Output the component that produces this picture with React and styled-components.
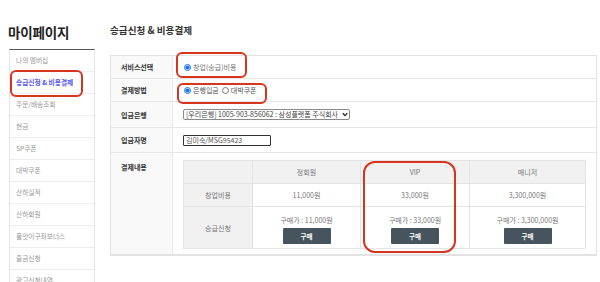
import React from 'react';
import styled, { createGlobalStyle } from 'styled-components';

const GlobalStyle = createGlobalStyle`
  body {
    margin: 0;
    background: #fff;
    font-family: "Noto Sans CJK KR", "Noto Sans", sans-serif;
    color: #333;
  }
`;

const Page = styled.div`
  position: relative;
  display: flex;
  width: 600px;
  height: 282px;
  overflow: hidden;
`;

//** SIDEBAR **//
const Sidebar = styled.aside`
  width: 86px;
  margin-left: 9px;
  flex-shrink: 0;
`;

const SideTitle = styled.h2`
  margin: 0 0 8px -1px;
  padding-top: 24px;
  font-size: 13.5px;
  line-height: 17px;
  font-weight: 700;
  color: #222;
  letter-spacing: -0.2px;
`;

const Menu = styled.ul`
  list-style: none;
  margin: 0;
  padding: 0;
  border-top: 1px solid #555;
  border-left: 1px solid #e6e6e6;
  border-right: 1px solid #e6e6e6;
`;

const MenuItem = styled.li`
  height: 21px;
  line-height: 21px;
  padding-left: 6px;
  border-bottom: 1px solid #eee;
  font-size: 6.7px;
  color: ${p => (p.$active ? '#5656ee' : '#999')};
  font-weight: ${p => (p.$active ? 700 : 400)};
  white-space: nowrap;
`;

//** MAIN **//
const Main = styled.main`
  width: 487px;
  margin-left: 15px;
`;

const MainTitle = styled.h3`
  margin: 0 0 19px;
  padding-top: 24px;
  font-size: 9.6px;
  line-height: 12px;
  font-weight: 700;
  color: #333;
`;

const FormTable = styled.table`
  width: 487px;
  table-layout: fixed;
  border-collapse: collapse;
  border: 1px solid #e2e2e2;
  border-bottom: 2px solid #e2e2e2;
`;

const Row = styled.tr`
  height: ${p => p.$h}px;
  border-bottom: 1px solid #e6e6e6;
`;

const Label = styled.th`
  width: 51px;
  padding: ${p => (p.$top ? '9px 0 0 10px' : '0 0 0 10px')};
  vertical-align: ${p => (p.$top ? 'top' : 'middle')};
  text-align: left;
  background: #f9f9f9;
  border-right: 1px solid #ebebeb;
  font-size: 7px;
  font-weight: 700;
  color: #333;
`;

const Cell = styled.td`
  padding: ${p => p.$pad || '0 0 0 10px'};
  vertical-align: middle;
  font-size: 7px;
  color: #777;
`;

const RadioGroup = styled.div`
  display: flex;
  align-items: center;
  gap: 3px;
  padding-left: 1px;
`;

const RadioLabel = styled.label`
  display: inline-flex;
  align-items: center;
  gap: 2px;
  color: ${p => p.$color || '#777'};
`;

const Radio = styled.input.attrs({ type: 'radio' })`
  width: 7px;
  height: 7px;
  margin: 0;
  accent-color: #1a73e8;
`;

const SelectWrap = styled.div`
  position: relative;
  width: 167px;
  height: 11px;
`;

const Select = styled.select`
  appearance: none;
  width: 100%;
  height: 11px;
  padding: 0 0 0 2px;
  border: 1px solid #8a8a8a;
  border-radius: 2px;
  background: #fff;
  font-family: inherit;
  font-size: 7px;
  line-height: 9px;
  color: #444;
  outline: 0;
`;

const Chevron = styled.svg`
  position: absolute;
  right: 2px;
  top: 3px;
  width: 6px;
  height: 5px;
  pointer-events: none;
`;

const TextInput = styled.input`
  width: 88px;
  height: 11px;
  box-sizing: border-box;
  padding: 0 2px;
  border: 1px solid #333;
  border-radius: 1px;
  font-family: inherit;
  font-size: 7px;
  color: #555;
  outline: 0;
`;

const PriceTable = styled.table`
  width: 100%;
  table-layout: fixed;
  border-collapse: collapse;
  border: 1px solid #e2e2e2;
`;

const PriceRow = styled.tr`
  height: ${p => p.$h}px;
`;

const PriceHead = styled.th`
  width: ${p => (p.$w ? `${p.$w}px` : 'auto')};
  padding: 0;
  background: #f1f1f1;
  border: 1px solid #e4e4e4;
  font-size: 7px;
  font-weight: 400;
  color: #777;
  text-align: center;
`;

const PriceLabel = styled.th`
  padding: 0;
  background: #f1f1f1;
  border: 1px solid #e4e4e4;
  font-size: 7px;
  font-weight: 400;
  color: #777;
  text-align: center;
`;

const PriceCell = styled.td`
  border: 1px solid #e4e4e4;
  text-align: center;
  font-size: 7px;
  color: #777;
  padding: 0;
`;

const BuyBox = styled.div`
  display: flex;
  flex-direction: column;
  align-items: center;
  gap: 3px;
  padding-top: 3px;
`;

const BuyButton = styled.button`
  width: 48px;
  height: 16px;
  border: 0;
  border-radius: 1px;
  background: #46545e;
  color: #fff;
  font-family: inherit;
  font-size: 6.5px;
  font-weight: 700;
  cursor: pointer;
`;

//** ANNOTATIONS **//
const Mark = styled.div`
  position: absolute;
  left: ${p => p.$x}px;
  top: ${p => p.$y}px;
  width: ${p => p.$w}px;
  height: ${p => p.$h}px;
  box-sizing: border-box;
  border: 2.5px solid #d8351f;
  border-radius: ${p => p.$r || 6}px;
  pointer-events: none;
`;

const menu = [
  '나의 멤버십',
  '승급신청 & 비용결제',
  '주문/배송조회',
  '현금',
  'SP쿠폰',
  '대박쿠폰',
  '산하실적',
  '산하회원',
  '풀앗이구좌보너스',
  '출금신청',
  '광고신청내역',
];

const plans = [
  { name: '정회원', fee: '11,000원', price: '11,000원', w: 107 },
  { name: 'VIP', fee: '33,000원', price: '33,000원', w: 108 },
  { name: '매니저', fee: '3,300,000원', price: '3,300,000원' },
];

export default function App() {
  return (
    <Page>
      <GlobalStyle />
      <Sidebar>
        <SideTitle>마이페이지</SideTitle>
        <Menu>
          {menu.map((m, i) => (
            <MenuItem key={m} $active={i === 1}>{m}</MenuItem>
          ))}
        </Menu>
      </Sidebar>

      <Main>
        <MainTitle>승급신청 &amp; 비용결제</MainTitle>
        <FormTable>
          <tbody>
            <Row $h={23}>
              <Label>서비스선택</Label>
              <Cell>
                <RadioGroup>
                  <RadioLabel>
                    <Radio name="svc" defaultChecked />
                    창업(승급)비용
                  </RadioLabel>
                </RadioGroup>
              </Cell>
            </Row>
            <Row $h={23}>
              <Label>결제방법</Label>
              <Cell>
                <RadioGroup>
                  <RadioLabel $color="#555">
                    <Radio name="pay" defaultChecked />
                    은행입금
                  </RadioLabel>
                  <RadioLabel $color="#555">
                    <Radio name="pay" />
                    대박쿠폰
                  </RadioLabel>
                </RadioGroup>
              </Cell>
            </Row>
            <Row $h={26}>
              <Label>입금은행</Label>
              <Cell>
                <SelectWrap>
                  <Select defaultValue="woori">
                    <option value="woori">[우리은행] 1005-903-856062 : 삼성플랫폼 주식회사</option>
                  </Select>
                  <Chevron viewBox="0 0 6 5">
                    <path d="M0.8 1.2 L3 3.6 L5.2 1.2" fill="none" stroke="#222" strokeWidth="1.3" />
                  </Chevron>
                </SelectWrap>
              </Cell>
            </Row>
            <Row $h={25}>
              <Label>입금자명</Label>
              <Cell>
                <TextInput defaultValue="김미숙/MSG95423" />
              </Cell>
            </Row>
            <Row $h={101}>
              <Label $top>결제내용</Label>
              <Cell $pad="7px 10px 5px 10px">
                <PriceTable>
                  <tbody>
                    <PriceRow $h={23}>
                      <PriceHead $w={68} />
                      {plans.map(p => (
                        <PriceHead key={p.name} $w={p.w}>{p.name}</PriceHead>
                      ))}
                    </PriceRow>
                    <PriceRow $h={23}>
                      <PriceLabel>창업비용</PriceLabel>
                      {plans.map(p => (
                        <PriceCell key={p.name}>{p.fee}</PriceCell>
                      ))}
                    </PriceRow>
                    <PriceRow $h={42}>
                      <PriceLabel>승급신청</PriceLabel>
                      {plans.map(p => (
                        <PriceCell key={p.name}>
                          <BuyBox>
                            <span>구매가 : {p.price}</span>
                            <BuyButton>구매</BuyButton>
                          </BuyBox>
                        </PriceCell>
                      ))}
                    </PriceRow>
                  </tbody>
                </PriceTable>
              </Cell>
            </Row>
          </tbody>
        </FormTable>
      </Main>

      <Mark $x={10} $y={70} $w={73} $h={27} />
      <Mark $x={176} $y={52} $w={71} $h={26} />
      <Mark $x={177} $y={83} $w={90} $h={21} />
      <Mark $x={363} $y={161} $w={93} $h={92} $r={12} />
    </Page>
  );
}
